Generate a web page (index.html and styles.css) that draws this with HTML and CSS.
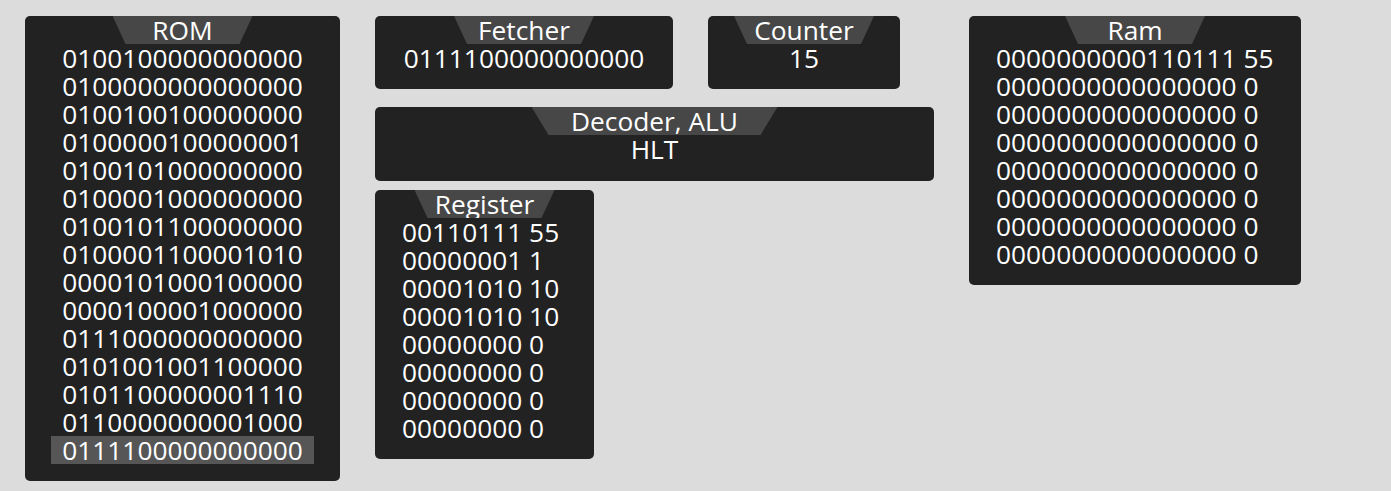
FILE: index.html
```html
<!DOCTYPE html>
<html lang="en">
<head>
<meta charset="utf-8">
<title>CPU</title>
<link rel="stylesheet" href="styles.css">
</head>
<body>
<div class="board">
  <section class="panel rom">
    <div class="tab">ROM</div>
    <div class="lines">
      <div class="row">0100100000000000</div>
      <div class="row">0100000000000000</div>
      <div class="row">0100100100000000</div>
      <div class="row">0100000100000001</div>
      <div class="row">0100101000000000</div>
      <div class="row">0100001000000000</div>
      <div class="row">0100101100000000</div>
      <div class="row">0100001100001010</div>
      <div class="row">0000101000100000</div>
      <div class="row">0000100001000000</div>
      <div class="row">0111000000000000</div>
      <div class="row">0101001001100000</div>
      <div class="row">0101100000001110</div>
      <div class="row">0110000000001000</div>
      <div class="row active">0111100000000000</div>
    </div>
  </section>

  <div class="mid">
    <div class="mid-row">
      <section class="panel fetcher">
        <div class="tab">Fetcher</div>
        <div class="value">0111100000000000</div>
      </section>
      <section class="panel counter">
        <div class="tab">Counter</div>
        <div class="value">15</div>
      </section>
    </div>
    <section class="panel decoder">
      <div class="tab tab-wide">Decoder, ALU</div>
      <div class="value">HLT</div>
    </section>
    <section class="panel register">
      <div class="tab">Register</div>
      <div class="lines">
        <div class="line">00110111 55</div>
        <div class="line">00000001 1</div>
        <div class="line">00001010 10</div>
        <div class="line">00001010 10</div>
        <div class="line">00000000 0</div>
        <div class="line">00000000 0</div>
        <div class="line">00000000 0</div>
        <div class="line">00000000 0</div>
      </div>
    </section>
  </div>

  <section class="panel ram">
    <div class="tab">Ram</div>
    <div class="lines">
      <div class="line">0000000000110111 55</div>
      <div class="line">0000000000000000 0</div>
      <div class="line">0000000000000000 0</div>
      <div class="line">0000000000000000 0</div>
      <div class="line">0000000000000000 0</div>
      <div class="line">0000000000000000 0</div>
      <div class="line">0000000000000000 0</div>
      <div class="line">0000000000000000 0</div>
    </div>
  </section>
</div>
</body>
</html>
```

FILE: styles.css
```css
html, body {
  margin: 0;
  padding: 0;
}

body {
  background: #dcdcdc;
  font-family: "Open Sans", "Noto Sans", sans-serif;
  font-size: 26.3px;
  line-height: 28px;
  color: #ffffff;
}

.board {
  display: flex;
  align-items: flex-start;
  gap: 35px;
  padding: 16px 0 0 25px;
}

.panel {
  display: flex;
  flex-direction: column;
  align-items: center;
  background: #222222;
  border-radius: 5px;
  padding-bottom: 17px;
  box-sizing: border-box;
}

.tab {
  height: 28px;
  min-width: 140px;
  box-sizing: border-box;
  text-align: center;
  background: #474747;
  clip-path: polygon(0 0, 100% 0, calc(100% - 13px) 100%, 13px 100%);
  white-space: nowrap;
  overflow: hidden;
}

.tab-wide {
  width: 246px;
  clip-path: polygon(0 0, 100% 0, calc(100% - 17px) 100%, 17px 100%);
}

.lines {
  display: flex;
  flex-direction: column;
  align-items: flex-start;
  white-space: nowrap;
}

.value {
  white-space: nowrap;
  text-align: center;
}

.rom {
  width: 315px;
  height: 465px;
}

.rom .row {
  padding: 0 11px;
}

.rom .row.active {
  background: #565656;
}

.mid {
  display: flex;
  flex-direction: column;
  align-items: flex-start;
  width: 559px;
}

.mid-row {
  display: flex;
  gap: 35px;
}

.fetcher {
  width: 298px;
  height: 73px;
}

.counter {
  width: 192px;
  height: 73px;
}

.decoder {
  width: 559px;
  height: 74px;
  margin-top: 18px;
}

.register {
  width: 219px;
  height: 269px;
  margin-top: 9px;
}

.register .lines {
  align-self: flex-start;
  padding-left: 27px;
}

.ram {
  width: 332px;
  height: 269px;
}

.ram .lines {
  align-self: flex-start;
  padding-left: 27px;
}
```
